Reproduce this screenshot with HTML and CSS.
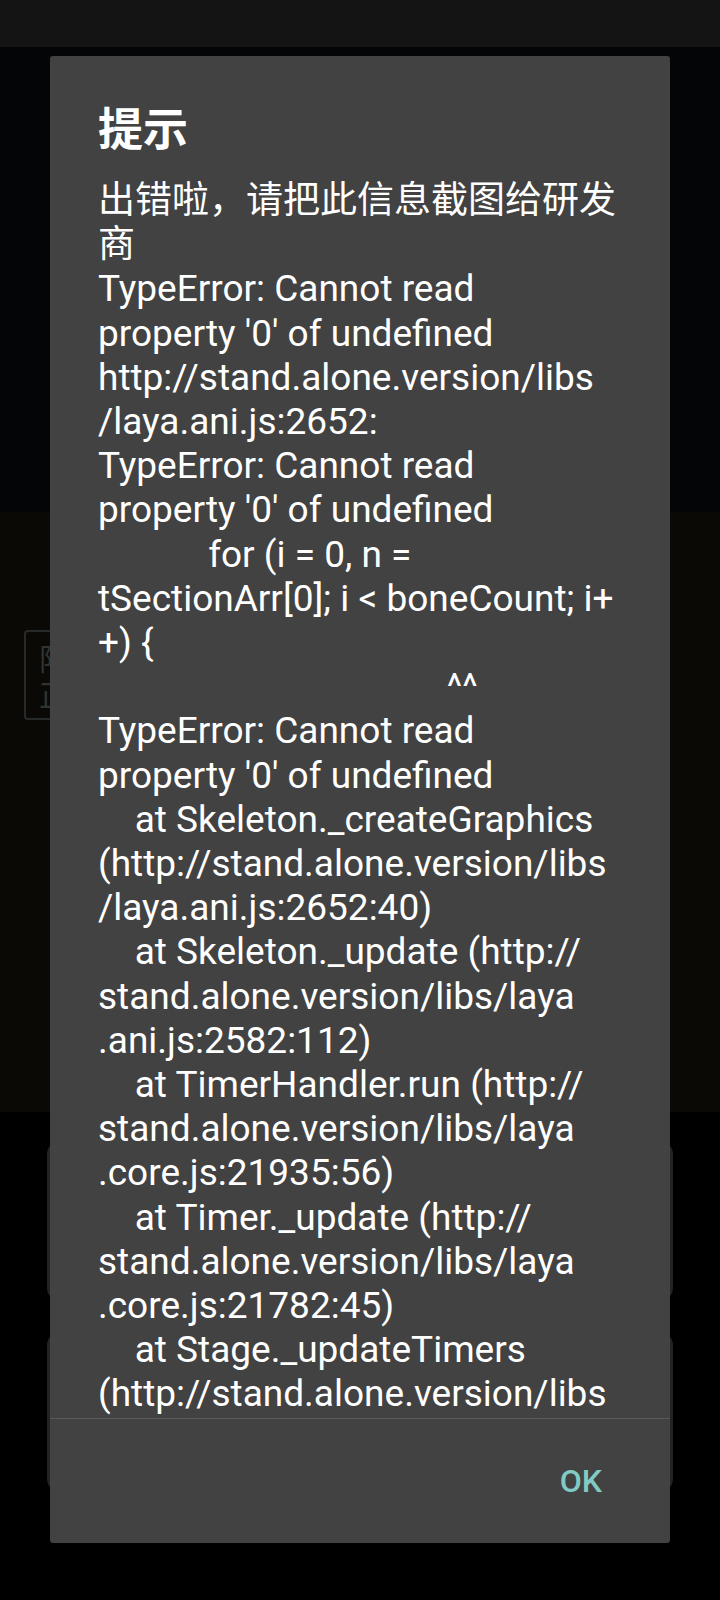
FILE: index.html
```html
<!DOCTYPE html>
<html lang="zh-CN">
  <head>
    <meta charset="UTF-8" />
    <meta name="viewport" content="width=device-width, initial-scale=1.0" />
    <title>提示</title>
    <link rel="stylesheet" href="styles.css">
  </head>
  <body>
    <div class="statusbar"></div>

    <!-- app content behind the dialog, dimmed -->
    <div class="app">
      <div class="app-top"></div>
      <div class="app-game">
        <div class="tag">
          <span>阳</span>
          <span>正</span>
        </div>
      </div>
      <div class="app-list">
        <div class="card"></div>
        <div class="card"></div>
      </div>
    </div>

    <div class="dialog">
      <div class="dialog-title">提示</div>
      <div class="dialog-body">
        <div class="message">出错啦，请把此信息截图给研发
商
TypeError: Cannot read
property '0' of undefined
http://stand.alone.version/libs
/laya.ani.js:2652:
TypeError: Cannot read
property '0' of undefined
            for (i = 0, n =
tSectionArr[0]; i &lt; boneCount; i+
+) {
                                      ^^
TypeError: Cannot read
property '0' of undefined
    at Skeleton._createGraphics
(http://stand.alone.version/libs
/laya.ani.js:2652:40)
    at Skeleton._update (http://
stand.alone.version/libs/laya
.ani.js:2582:112)
    at TimerHandler.run (http://
stand.alone.version/libs/laya
.core.js:21935:56)
    at Timer._update (http://
stand.alone.version/libs/laya
.core.js:21782:45)
    at Stage._updateTimers
(http://stand.alone.version/libs</div>
      </div>
      <div class="dialog-actions">
        <button class="btn-ok">OK</button>
      </div>
    </div>
  </body>
</html>
```

FILE: styles.css
```css
/* page */
html, body {
  margin: 0;
  padding: 0;
}

body {
  width: 720px;
  height: 1600px;
  overflow: hidden;
  background: #000000;
  position: relative;
  font-family: Roboto, "Noto Sans CJK SC", sans-serif;
}

.statusbar {
  height: 47px;
  background: #141414;
}

/* dimmed app behind */
.app-top {
  height: 465px;
  background: #040507;
}

.app-game {
  height: 600px;
  background: #0b0905;
  padding-top: 118px;
  box-sizing: border-box;
}

/* only the left part of this badge peeks out from under the dialog */
.tag {
  margin-left: 24px;
  width: 26px;
  height: 90px;
  border: 2px solid #262a28;
  border-right: 0;
  border-radius: 4px 0 0 4px;
  box-sizing: border-box;
  overflow: hidden;
  display: flex;
  flex-direction: column;
  justify-content: center;
  padding-left: 13px;
  color: #2f3432;
  font-size: 30px;
  line-height: 36px;
  font-family: "Noto Sans CJK SC", sans-serif;
}

.tag span {
  display: block;
  width: 11px;
  overflow: hidden;
}

.app-list {
  padding: 30px 47px 0;
  display: flex;
  flex-direction: column;
  gap: 33px;
}

.card {
  height: 158px;
  background: #222424;
  border-radius: 12px;
}

/* dialog */
.dialog {
  position: absolute;
  left: 50px;
  top: 56px;
  width: 620px;
  height: 1487px;
  background: #424242;
  border-radius: 3px;
  display: flex;
  flex-direction: column;
  color: #ffffff;
}

.dialog-title {
  padding: 42px 48px 0;
  font-family: "Noto Sans CJK SC", sans-serif;
  font-size: 45px;
  font-weight: 700;
  line-height: 57px;
}

.dialog-body {
  flex: 1;
  overflow: hidden;
  padding: 24px 48px 0;
}

.message {
  white-space: pre;
  font-size: 37px;
  line-height: 44.2px;
}

.dialog-actions {
  height: 124px;
  border-top: 1px solid #595959;
  display: flex;
  justify-content: flex-end;
  align-items: center;
  padding-right: 52px;
}

.btn-ok {
  background: none;
  border: 0;
  padding: 8px 16px;
  color: #80cbc4;
  font-family: Roboto, sans-serif;
  font-size: 32px;
  font-weight: 500;
}
```
